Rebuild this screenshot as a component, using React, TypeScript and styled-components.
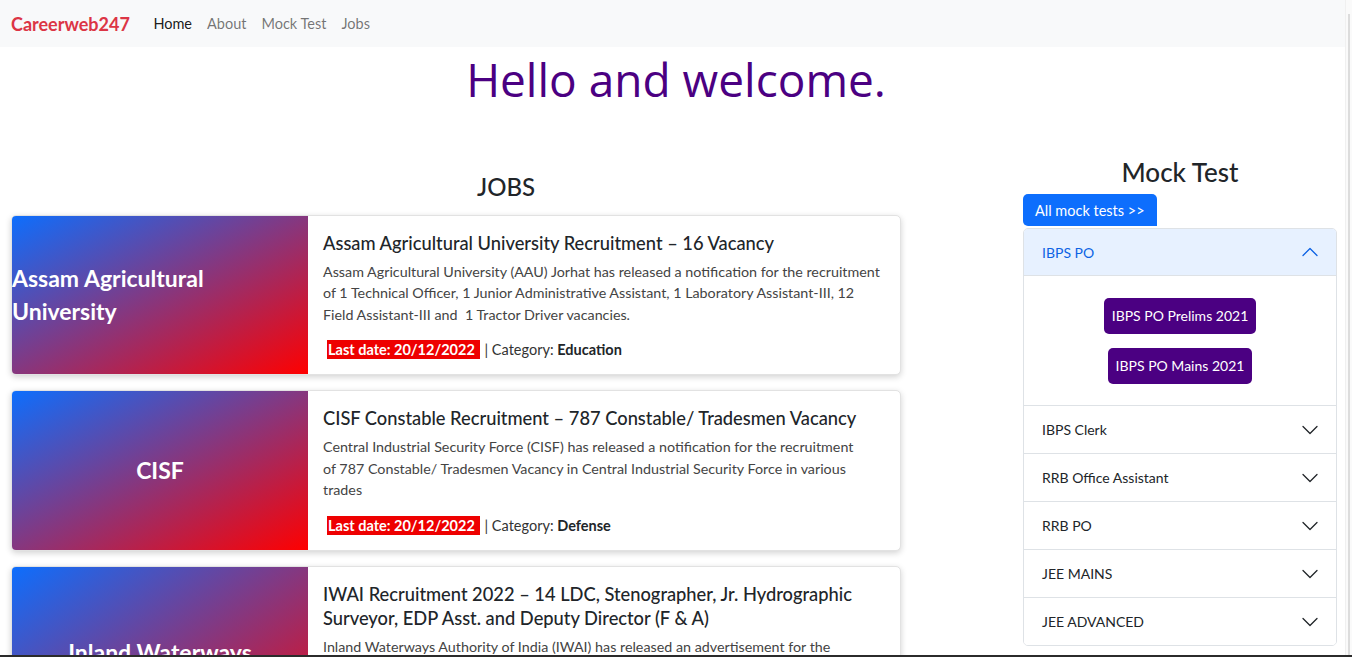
import React from 'react'
import styled, { createGlobalStyle } from 'styled-components'

const GlobalStyle = createGlobalStyle`
  html, body {
    margin: 0;
    padding: 0;
    overflow: hidden;
    background: #fff;
  }
  body {
    font-family: 'Lato', 'Open Sans', sans-serif;
    color: #212529;
  }
  * {
    box-sizing: border-box;
  }
`

const Page = styled.div`
  width: 1352px;
  height: 657px;
  overflow: hidden;
  position: relative;
`

const Navbar = styled.nav`
  height: 47px;
  width: 1345px;
  background: #f8f9fa;
  display: flex;
  align-items: center;
  padding-left: 11px;
`

const Brand = styled.a`
  font-size: 18px;
  font-weight: 700;
  color: #dc3545;
  margin-right: 16px;
  text-decoration: none;
`

const NavLink = styled.a<{ active?: boolean }>`
  font-size: 14.5px;
  padding: 0 7.5px;
  color: ${({ active }) => (active ? 'rgba(0,0,0,0.9)' : 'rgba(0,0,0,0.55)')};
  text-decoration: none;
`

const Welcome = styled.h1`
  margin: 6px 0 0;
  text-align: center;
  font-family: 'Open Sans', sans-serif;
  font-weight: 400;
  font-size: 46px;
  line-height: 53px;
  color: #4b0082;
`

const Row = styled.div`
  display: flex;
  margin-top: 51px;
`

const JobsCol = styled.div`
  width: 1012px;
  padding: 0 11px;
`

const MockCol = styled.div`
  width: 336px;
  padding: 0 11px;
`

const SectionTitle = styled.h2<{ size: number }>`
  margin: 0;
  text-align: center;
  font-weight: 500;
  font-size: ${({ size }) => size}px;
  line-height: 1.2;
`

const JobsTitle = styled(SectionTitle)`
  margin: 16px 0 13px;
`

const CardList = styled.div`
  display: flex;
  flex-direction: column;
  gap: 15px;
  width: 890px;
`

const Card = styled.div`
  display: flex;
  border: 1px solid #e2e2e2;
  border-radius: 5px;
  overflow: hidden;
  background: #fff;
  box-shadow: 0 2px 6px rgba(0, 0, 0, 0.18);
`

const CardImage = styled.div<{ center?: boolean }>`
  flex: 0 0 296px;
  display: flex;
  align-items: center;
  justify-content: center;
  background: linear-gradient(to bottom right, #0d6efd, #ff0000);
  color: #fff;
  font-weight: 700;
  font-size: 23px;
  line-height: 33px;
  text-align: ${({ center }) => (center ? 'center' : 'left')};
`

const OrgName = styled.span<{ narrow?: boolean }>`
  max-width: ${({ narrow }) => (narrow ? '250px' : '296px')};
`

const CardBody = styled.div`
  flex: 1;
  padding: 15px 15px 14px;
`

const CardTitle = styled.h5`
  margin: 0 0 6px;
  font-size: 18.3px;
  font-weight: 500;
  line-height: 24px;
  color: #212529;
`

const CardText = styled.p`
  margin: 0 0 14px;
  font-size: 14.3px;
  line-height: 21.5px;
  color: #444;
`

const CardMeta = styled.div`
  font-size: 14.5px;
  line-height: 21px;
  color: #333;
  padding-left: 4px;
`

const LastDate = styled.span`
  background: #ee0000;
  color: #fff;
  font-weight: 700;
  padding: 1px 5px 1px 1px;
  margin-right: 1px;
`

const Strong = styled.b`
  color: #212529;
`

const AllButton = styled.a`
  display: inline-block;
  margin-top: 6px;
  background: #0d6efd;
  color: #fff;
  font-size: 14.5px;
  line-height: 21px;
  padding: 6px 12px 5px 12px;
  border-radius: 5px 5px 0 5px;
  text-decoration: none;
`

const Accordion = styled.div`
  border: 1px solid #dee2e6;
  border-radius: 5px;
  overflow: hidden;
  margin-top: 2px;
`

const AccItem = styled.div`
  & + & {
    border-top: 1px solid #dee2e6;
  }
`

const AccHeader = styled.div<{ open?: boolean }>`
  height: 47px;
  display: flex;
  align-items: center;
  justify-content: space-between;
  padding: 0 18px;
  font-size: 14px;
  color: ${({ open }) => (open ? '#0c63e4' : '#212529')};
  background: ${({ open }) => (open ? '#e7f1ff' : '#fff')};
  border-bottom: ${({ open }) => (open ? '1px solid #dee2e6' : 'none')};
`

const AccBody = styled.div`
  height: 129px;
  display: flex;
  flex-direction: column;
  align-items: center;
  justify-content: center;
  gap: 14px;
`

const TestButton = styled.a`
  background: #4b0082;
  color: #fff;
  font-size: 14px;
  line-height: 21px;
  padding: 7px 8px 8px;
  border-radius: 5px;
  text-decoration: none;
`

const ScrollRail = styled.div`
  position: absolute;
  top: 0;
  right: 0;
  width: 7px;
  height: 100%;
  background: #fafafa;
  border-left: 1px solid #f0f0f0;
  &::after {
    content: '';
    position: absolute;
    top: 14px;
    bottom: 0;
    left: 2px;
    width: 2px;
    background: #dcdcdc;
  }
`

const TaskStrip = styled.div`
  position: absolute;
  left: 0;
  right: 0;
  bottom: 0;
  height: 2px;
  background: #2b2b2b;
`

const Chevron = ({ up, color }: { up?: boolean; color: string }) => (
  <svg width="16" height="16" viewBox="0 0 16 16" fill="none">
    <path
      d={up ? 'M1 11.5 L8 4.5 L15 11.5' : 'M1 4.5 L8 11.5 L15 4.5'}
      stroke={color}
      strokeWidth="1.3"
      strokeLinecap="round"
      strokeLinejoin="round"
    />
  </svg>
)

const jobs = [
  {
    org: 'Assam Agricultural University',
    center: false,
    title: 'Assam Agricultural University Recruitment – 16 Vacancy',
    text:
      'Assam Agricultural University (AAU) Jorhat has released a notification for the recruitment of 1 Technical Officer, 1 Junior Administrative Assistant, 1 Laboratory Assistant-III, 12 Field Assistant-III and \u00a01 Tractor Driver vacancies.',
    category: 'Education'
  },
  {
    org: 'CISF',
    center: true,
    title: 'CISF Constable Recruitment – 787 Constable/ Tradesmen Vacancy',
    text:
      'Central Industrial Security Force (CISF) has released a notification for the recruitment of\u00a0787 Constable/ Tradesmen Vacancy in Central Industrial Security Force in various trades',
    category: 'Defense'
  },
  {
    org: 'Inland Waterways Authority of India',
    center: true,
    title: 'IWAI Recruitment 2022 – 14 LDC, Stenographer, Jr. Hydrographic Surveyor, EDP Asst. and Deputy Director (F & A)',
    text:
      'Inland Waterways Authority of India (IWAI) has released an advertisement for the recruitment of 14 LDC, Stenographer, Jr. Hydrographic Surveyor, EDP Asst. and Deputy Director (F & A) vacancies. Interested candidates can apply offline on or before the last date mentioned in the notification.',
    category: 'Government'
  }
]

const mockGroups = ['IBPS Clerk', 'RRB Office Assistant', 'RRB PO', 'JEE MAINS', 'JEE ADVANCED']

export default function App() {
  return (
    <Page>
      <GlobalStyle />
      <Navbar>
        <Brand href="#">Careerweb247</Brand>
        <NavLink href="#" active>
          Home
        </NavLink>
        <NavLink href="#">About</NavLink>
        <NavLink href="#">Mock Test</NavLink>
        <NavLink href="#">Jobs</NavLink>
      </Navbar>
      <Welcome>Hello and welcome.</Welcome>
      <Row>
        <JobsCol>
          <JobsTitle size={24}>JOBS</JobsTitle>
          <CardList>
            {jobs.map(job => (
              <Card key={job.title}>
                <CardImage center={job.center}>
                  <OrgName narrow={job.center}>{job.org}</OrgName>
                </CardImage>
                <CardBody>
                  <CardTitle>{job.title}</CardTitle>
                  <CardText>{job.text}</CardText>
                  <CardMeta>
                    <LastDate>Last date: 20/12/2022</LastDate> | Category: <Strong>{job.category}</Strong>
                  </CardMeta>
                </CardBody>
              </Card>
            ))}
          </CardList>
        </JobsCol>
        <MockCol>
          <SectionTitle size={26}>Mock Test</SectionTitle>
          <AllButton href="#">All mock tests &gt;&gt;</AllButton>
          <Accordion>
            <AccItem>
              <AccHeader open>
                IBPS PO
                <Chevron up color="#0c63e4" />
              </AccHeader>
              <AccBody>
                <TestButton href="#">IBPS PO Prelims 2021</TestButton>
                <TestButton href="#">IBPS PO Mains 2021</TestButton>
              </AccBody>
            </AccItem>
            {mockGroups.map(name => (
              <AccItem key={name}>
                <AccHeader>
                  {name}
                  <Chevron color="#212529" />
                </AccHeader>
              </AccItem>
            ))}
          </Accordion>
        </MockCol>
      </Row>
      <ScrollRail />
      <TaskStrip />
    </Page>
  )
}
